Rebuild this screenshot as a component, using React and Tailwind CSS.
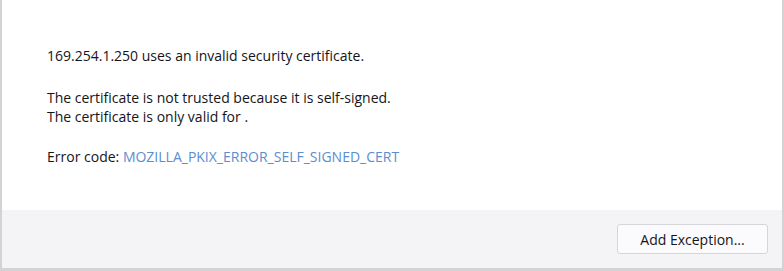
export default function App() {
  return (
    <div className="flex h-[271px] w-[784px] flex-col border-b-[3px] border-l-2 border-r-2 border-[#d3d3d3] bg-white font-['Open_Sans',sans-serif] text-[14px] leading-[19px] text-[#15141a]">
      <div className="flex-1 pl-[45px] pt-[46px]">
        <p>169.254.1.250 uses an invalid security certificate.</p>
        <p className="mt-[23px]">The certificate is not trusted because it is self-signed.</p>
        <p>The certificate is only valid for .</p>
        <p className="mt-[21px]">
          Error code: <a className="text-[#5b8dcf]">MOZILLA_PKIX_ERROR_SELF_SIGNED_CERT</a>
        </p>
      </div>
      <div className="flex h-[58px] items-center justify-end bg-[#f4f4f6] pr-[14px]">
        <button className="h-[30px] w-[151px] rounded-[3px] border border-[#d6d6da] bg-[#fbfbfd] text-[14px] text-[#15141a]">
          Add Exception...
        </button>
      </div>
    </div>
  );
}
